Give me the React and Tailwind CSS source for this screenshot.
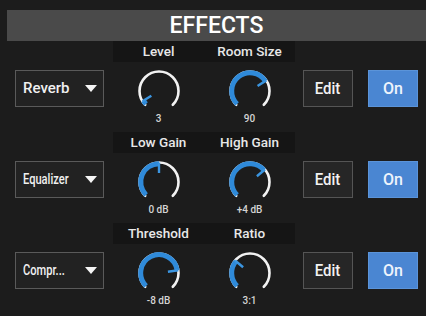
import React from 'react'

const rows = [
  {
    name: 'Reverb',
    squeeze: false,
    knobs: [
      { label: 'Level', value: '3', angle: -122 },
      { label: 'Room Size', value: '90', angle: 57 },
    ],
  },
  {
    name: 'Equalizer',
    squeeze: true,
    knobs: [
      { label: 'Low Gain', value: '0 dB', angle: 0 },
      { label: 'High Gain', value: '+4 dB', angle: 50 },
    ],
  },
  {
    name: 'Compr...',
    squeeze: true,
    knobs: [
      { label: 'Threshold', value: '-8 dB', angle: 82 },
      { label: 'Ratio', value: '3:1', angle: -50 },
    ],
  },
]

// point on circle, angle measured clockwise from top
const pt = (r, deg) => {
  const a = (deg * Math.PI) / 180
  return [22 + r * Math.sin(a), 22 - r * Math.cos(a)]
}

const arc = (r, from, to) => {
  const [x1, y1] = pt(r, from)
  const [x2, y2] = pt(r, to)
  const large = to - from > 180 ? 1 : 0
  return `M ${x1} ${y1} A ${r} ${r} 0 ${large} 1 ${x2} ${y2}`
}

function Knob({ angle, value }) {
  const [tx1, ty1] = pt(9, angle)
  const [tx2, ty2] = pt(19.5, angle)
  return (
    <div className="flex flex-col items-center pt-[7px]">
      <svg width="44" height="44" viewBox="0 0 44 44">
        <path d={arc(19.5, -135, 135)} fill="none" stroke="#f2f2f2" strokeWidth="2.6" strokeLinecap="round" />
        <path d={arc(18.3, -135, angle)} fill="none" stroke="#2f8ad9" strokeWidth="5" />
        <line x1={tx1} y1={ty1} x2={tx2} y2={ty2} stroke="#3b95e0" strokeWidth="2.4" />
      </svg>
      <div className="text-[10px] leading-[12px] font-medium text-[#d4d4d4]">{value}</div>
    </div>
  )
}

function EffectRow({ row }) {
  return (
    <div className="flex flex-col h-[91px]">
      <div className="ml-[113px] w-[182px] h-[21px] bg-[#151515] grid grid-cols-2 items-center text-[13.5px] font-medium text-[#e8e8e8]">
        {row.knobs.map((k) => (
          <div key={k.label} className="text-center">{k.label}</div>
        ))}
      </div>
      <div className="flex h-[70px] pl-[15px]">
        <div className="mt-[8px] w-[89px] h-[37px] border border-[#5a5a5a] bg-[#222222] flex items-center justify-between pl-[7px] pr-[6px]">
          <span className={row.squeeze ? 'inline-block text-[15px] font-medium text-[#f0f0f0] scale-x-[0.74] origin-left whitespace-nowrap' : 'inline-block text-[15px] font-medium text-[#f0f0f0] whitespace-nowrap'}>
            {row.name}
          </span>
          <svg width="12" height="7" viewBox="0 0 12 7">
            <polygon points="0,0 12,0 6,7" fill="#f5f5f5" />
          </svg>
        </div>
        <div className="ml-[9px] w-[182px] grid grid-cols-2">
          {row.knobs.map((k) => (
            <Knob key={k.label} angle={k.angle} value={k.value} />
          ))}
        </div>
        <button className="ml-[8px] mt-[8px] w-[50px] h-[37px] border border-[#555555] bg-[#262626] flex items-center justify-center text-[17px] font-medium text-[#f2f2f2]">
          <span className="inline-block scale-x-[0.88]">Edit</span>
        </button>
        <button className="ml-[15px] mt-[8px] w-[50px] h-[37px] border border-[#5b94d9] bg-[#4a86d2] flex items-center justify-center text-[16px] font-medium text-[#eef4fc]">
          On
        </button>
      </div>
    </div>
  )
}

export default function App() {
  return (
    <div className="w-[426px] h-[316px] overflow-hidden bg-[#1c1c1c] pt-[10px]" style={{ fontFamily: 'Roboto, "Liberation Sans", sans-serif' }}>
      <div className="ml-[7px] h-[31px] bg-[#4a4a4a] flex items-center justify-center text-[23px] font-medium text-white leading-none">
        EFFECTS
      </div>
      {rows.map((row) => (
        <EffectRow key={row.name} row={row} />
      ))}
    </div>
  )
}
